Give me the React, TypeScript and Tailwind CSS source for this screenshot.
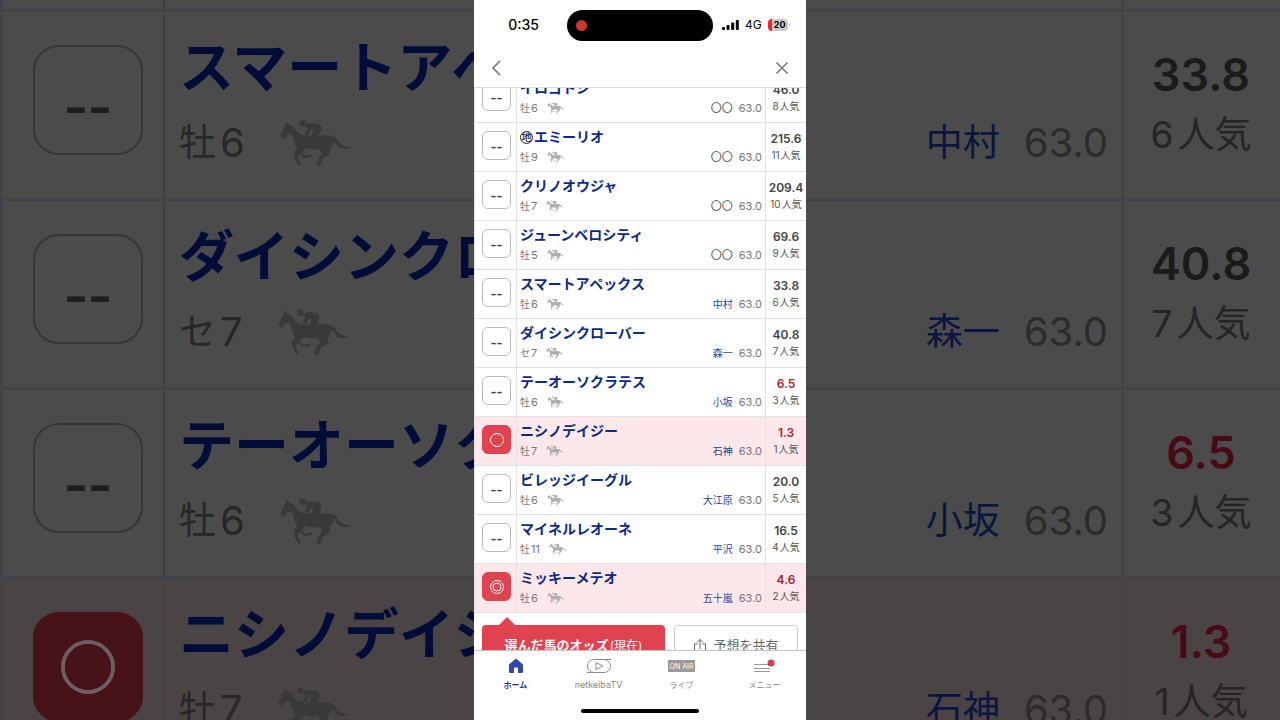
import clsx from "clsx";

interface Horse {
  mark: "none" | "single" | "double";
  name: string;
  local?: boolean;
  sex: string;
  age: number;
  jockey?: string;
  odds: string;
  rank: number;
}

const horses: Horse[] = [
  { mark: "none", name: "イロゴトシ", sex: "牡", age: 6, odds: "46.0", rank: 8 },
  { mark: "none", name: "エミーリオ", local: true, sex: "牡", age: 9, odds: "215.6", rank: 11 },
  { mark: "none", name: "クリノオウジャ", sex: "牡", age: 7, odds: "209.4", rank: 10 },
  { mark: "none", name: "ジューンベロシティ", sex: "牡", age: 5, odds: "69.6", rank: 9 },
  { mark: "none", name: "スマートアペックス", sex: "牡", age: 6, jockey: "中村", odds: "33.8", rank: 6 },
  { mark: "none", name: "ダイシンクローバー", sex: "セ", age: 7, jockey: "森一", odds: "40.8", rank: 7 },
  { mark: "none", name: "テーオーソクラテス", sex: "牡", age: 6, jockey: "小坂", odds: "6.5", rank: 3 },
  { mark: "single", name: "ニシノデイジー", sex: "牡", age: 7, jockey: "石神", odds: "1.3", rank: 1 },
  { mark: "none", name: "ビレッジイーグル", sex: "牡", age: 6, jockey: "大江原", odds: "20.0", rank: 5 },
  { mark: "none", name: "マイネルレオーネ", sex: "牡", age: 11, jockey: "平沢", odds: "16.5", rank: 4 },
  { mark: "double", name: "ミッキーメテオ", sex: "牡", age: 6, jockey: "五十嵐", odds: "4.6", rank: 2 },
];

const backdropHorses = horses.slice(4, 8);

const HorseIcon = ({ className }: { className: string }) => (
  <svg viewBox="28 26 228 150" className={className} fill="currentColor" aria-hidden="true">
    <path d="M32 79 L44 52 L51 41 L54 32 L59 42 Q72 48 82 62 Q92 76 112 78 L178 77 Q200 78 208 88 Q220 112 252 115 Q232 125 216 115 Q206 106 199 94 Q198 108 188 118 L187 138 L166 149 L156 173 L144 171 L151 149 L163 135 L156 120 Q132 124 112 117 L98 130 L110 141 L130 137 L132 144 L108 149 L90 134 L87 150 L97 169 L88 171 L77 150 L73 130 L86 118 Q76 106 74 92 L68 74 L56 74 L42 89 Z" />
    <circle cx="101" cy="40" r="10" />
    <path d="M107 47 Q120 36 134 39 L152 42 Q163 48 160 60 L152 78 L128 78 L138 62 L129 58 L119 77 L108 72 L118 55 Z" />
  </svg>
);

const MarkCircle = ({ mark, className }: { mark: Horse["mark"]; className: string }) => (
  <svg viewBox="0 0 14 14" className={className} fill="none" stroke="currentColor" aria-hidden="true">
    <circle cx="7" cy="7" r="6.5" />
    {mark === "double" && <circle cx="7" cy="7" r="4" />}
  </svg>
);

const StatusBar = () => (
  <div className="grid h-[50px] grid-cols-[1fr_146px_1fr] items-center text-black">
    <span className="pl-1.5 text-center text-sm font-medium">0:35</span>
    <div className="flex h-[31px] items-center rounded-full bg-black pl-[9px]">
      <span className="size-[11px] rounded-full bg-[#cf3533]" />
    </div>
    <div className="flex items-center gap-1.5 pl-[9px]">
      <svg viewBox="0 0 17 10" className="h-2.5 w-[17px]" aria-hidden="true">
        <rect x="0" y="7" width="3" height="3" rx="1" />
        <rect x="4.6" y="5" width="3" height="5" rx="1" />
        <rect x="9.2" y="2.5" width="3" height="7.5" rx="1" />
        <rect x="13.8" y="0" width="3" height="10" rx="1" />
      </svg>
      <span className="text-xs">4G</span>
      <div className="flex items-center gap-px">
        <div className="flex h-3 w-5 items-center justify-center rounded border-l-4 border-[#ee2436] bg-[#c9c9c9] text-[9px] font-bold">
          20
        </div>
        <span className="h-1 w-px rounded-r bg-[#c9c9c9]" />
      </div>
    </div>
  </div>
);

const Header = () => (
  <header className="shrink-0 border-b border-[#dcdce0]">
    <StatusBar />
    <div className="flex h-[37px] items-center justify-between px-4 pb-0.5 text-[#777]">
      <button type="button" aria-label="戻る">
        <svg viewBox="0 0 12 16" className="h-4 w-3" fill="none" stroke="currentColor" strokeWidth="1.7">
          <path d="M10 1 L3 8 L10 15" />
        </svg>
      </button>
      <button type="button" aria-label="閉じる">
        <svg viewBox="0 0 16 16" className="size-4" fill="none" stroke="currentColor" strokeWidth="1.5">
          <path d="M2.5 2.5 L13.5 13.5 M13.5 2.5 L2.5 13.5" />
        </svg>
      </button>
    </div>
  </header>
);

const HorseRow = ({ horse }: { horse: Horse }) => {
  const marked = horse.mark !== "none";

  return (
    <tr className={clsx("h-[49px]", marked && "bg-[#fce8ea]")}>
      <td className="border-r border-b border-[#e2e2e6] p-0 pb-[3px] pl-[7px]">
        <button
          type="button"
          aria-label={`${horse.name}の印`}
          className={clsx(
            "flex size-[29px] items-center justify-center rounded-md border font-['Liberation_Sans',sans-serif] text-lg leading-none",
            marked ? "border-[#e04350] bg-[#e04350] text-white" : "border-[#bbb] bg-white pt-0.5 text-[#444]",
          )}
        >
          {marked ? <MarkCircle mark={horse.mark} className="size-3.5" /> : "--"}
        </button>
      </td>
      <td className="border-r border-b border-[#e2e2e6] pt-1 pr-[3px] pb-0 pl-[3px] align-top">
        <a href="#" className="flex h-5 items-center text-sm leading-5 font-bold text-[#0b2a86]">
          {horse.local && (
            <span className="mr-px flex size-[13px] items-center justify-center rounded-full border border-[#222] text-[10px] leading-none font-medium text-[#222]">
              地
            </span>
          )}
          {horse.name}
        </a>
        <div className="flex h-5 items-center text-[10px] text-[#777]">
          <span>{horse.sex}</span>
          <span className="ml-px text-[11px]">{horse.age}</span>
          <HorseIcon className="ml-[9px] h-3 w-[18px] text-[#adadad]" />
          {horse.jockey ? (
            <a href="#" className="ml-auto text-[#2c459b]">
              {horse.jockey}
            </a>
          ) : (
            <span className="ml-auto text-[11px] text-[#444]">〇〇</span>
          )}
          <span className="ml-1.5 text-[11px]">63.0</span>
        </div>
      </td>
      <td className="border-b border-[#e2e2e6] p-0 text-center">
        <div className={clsx("text-xs leading-4 font-semibold", Number(horse.odds) < 10 ? "text-[#b01c35]" : "text-[#444]")}>
          {horse.odds}
        </div>
        <div className="text-[10px] leading-4 text-[#555]">
          <span className="mr-px">{horse.rank}</span>人気
        </div>
      </td>
    </tr>
  );
};

const Actions = () => (
  <div className="flex gap-[9px] px-2 pt-3">
    <button
      type="button"
      className="relative flex h-[42px] flex-3 items-center justify-center gap-px rounded-sm bg-[#e04350] text-[13px] font-bold text-white"
    >
      <span className="absolute -top-2 left-[17px] border-x-8 border-b-8 border-x-transparent border-b-[#e04350]" />
      選んだ馬のオッズ<span className="text-xs font-normal">(現在)</span>
    </button>
    <button
      type="button"
      className="flex h-[42px] flex-2 items-center justify-center gap-1.5 rounded-sm border border-[#ccc] text-[13px] text-[#666]"
    >
      <svg viewBox="0 0 14 16" className="h-4 w-3.5" fill="none" stroke="currentColor" aria-hidden="true">
        <path d="M4.5 6 H1.5 V14.5 H12.5 V6 H9.5 M7 11 V1.5 M4 4.5 L7 1.5 L10 4.5" />
      </svg>
      予想を共有
    </button>
  </div>
);

const TabBar = () => (
  <nav className="h-[70px] shrink-0 border-t border-[#c4c4c8]">
    <div className="grid grid-cols-4 pt-1.5 text-center text-[8px] leading-3 text-[#888]">
      <a href="#" className="flex flex-col items-center gap-1 font-bold text-[#1c399e]">
        <span className="flex h-[18px] items-center">
          <svg viewBox="0 0 16 16" className="size-4" fill="#3049ae" aria-hidden="true">
            <path d="M8 0.5 L15 6.5 V14 Q15 15 14 15 H10 V10.5 Q10 9.5 9 9.5 H7 Q6 9.5 6 10.5 V15 H2 Q1 15 1 14 V6.5 Z" />
          </svg>
        </span>
        ホーム
      </a>
      <a href="#" className="flex flex-col items-center gap-1">
        <span className="flex h-[18px] items-center">
          <svg viewBox="0 0 24 14" className="h-3.5 w-6" fill="none" stroke="#8e8e8e" aria-hidden="true">
            <rect x="0.5" y="0.5" width="23" height="13" rx="6.5" />
            <path d="M7 0.5 H24 M0 13.5 H17" />
            <path d="M9 3.5 V10.5 L16 7 Z" strokeLinejoin="round" />
          </svg>
        </span>
        <span className="text-[9px]">netkeibaTV</span>
      </a>
      <a href="#" className="flex flex-col items-center gap-1">
        <span className="flex h-[18px] items-center">
          <span className="flex h-3 w-[27px] items-center justify-center bg-[#9a9a9a] text-[7px] leading-none whitespace-nowrap text-white">
            ON AIR
          </span>
        </span>
        ライブ
      </a>
      <a href="#" className="flex flex-col items-center gap-1">
        <span className="flex h-[18px] items-center">
          <svg viewBox="0 0 22 14" className="h-3.5 w-[22px]" aria-hidden="true">
            <path d="M0 5.5 H16 M0 9.5 H16 M0 12.5 H16" stroke="#999" />
            <circle cx="17" cy="4" r="3.5" fill="#e03a49" />
          </svg>
        </span>
        メニュー
      </a>
    </div>
    <div className="mx-auto mt-[18px] h-1 w-[118px] rounded-full bg-black" />
  </nav>
);

// Dimmed, enlarged copies of the same list on both sides of the phone screen
const BackdropLeft = () => (
  <div className="min-w-0 flex-1 overflow-hidden bg-[#4b4b4b]" aria-hidden="true">
    <table className="w-full table-fixed border-separate border-spacing-0 border-l-3 border-[#434347] whitespace-nowrap">
      <colgroup>
        <col className="w-[162px]" />
        <col />
      </colgroup>
      <tbody>
        <tr className="h-3">
          <td className="border-r-3 border-b-3 border-[#434347] p-0" />
          <td className="border-b-3 border-[#434347] p-0" />
        </tr>
        {backdropHorses.map((horse) => {
          const marked = horse.mark !== "none";
          return (
            <tr key={horse.name} className={clsx("h-[189px]", marked && "bg-[#4b4444]")}>
              <td className="border-r-3 border-b-3 border-[#434347] p-0 pt-[33px] pl-[30px] align-top">
                <div
                  className={clsx(
                    "flex size-[110px] items-center justify-center rounded-[26px] border-2 font-['Liberation_Sans',sans-serif] text-[72px] leading-none",
                    marked ? "border-[#471319] bg-[#471319] text-[#6c6062]" : "border-[#363636] pt-2 text-[#1d1d1d]",
                  )}
                >
                  {marked ? <MarkCircle mark={horse.mark} className="size-[54px]" /> : "--"}
                </div>
              </td>
              <td className="overflow-hidden border-b-3 border-[#434347] p-0 pt-[17px] pl-[14px] align-top">
                <div className="h-[76px] text-[55px] leading-[76px] font-bold text-[#020c38]">{horse.name.slice(0, 6)}</div>
                <div className="flex h-[76px] items-center text-[37px] text-[#272727]">
                  <span>{horse.sex}</span>
                  <span className="ml-1 text-[40px]">{horse.age}</span>
                  <HorseIcon className="ml-[34px] h-12 w-[73px] text-[#393939]" />
                </div>
              </td>
            </tr>
          );
        })}
      </tbody>
    </table>
  </div>
);

const BackdropRight = () => (
  <div className="min-w-0 flex-1 overflow-hidden bg-[#4b4b4b]" aria-hidden="true">
    <table className="w-full table-fixed border-separate border-spacing-0 whitespace-nowrap">
      <colgroup>
        <col />
        <col className="w-[156px]" />
      </colgroup>
      <tbody>
        <tr className="h-3">
          <td className="border-r-3 border-b-3 border-[#434347] p-0" />
          <td className="border-b-3 border-[#434347] p-0" />
        </tr>
        {backdropHorses.map((horse) => (
          <tr key={horse.name} className={clsx("h-[189px]", horse.mark !== "none" && "bg-[#4b4444]")}>
            <td className="border-r-3 border-b-3 border-[#434347] p-0 pt-[93px] pr-[13px] align-top">
              <div className="flex h-[76px] items-center justify-end gap-6">
                <span className="text-[37px] text-[#0a1640]">{horse.jockey}</span>
                <span className="text-[40px] text-[#2b2b2b]">63.0</span>
              </div>
            </td>
            <td className="border-b-3 border-[#434347] p-0 pr-0.5 text-center">
              <div className={clsx("text-[45px] leading-[60px] font-semibold", Number(horse.odds) < 10 ? "text-[#480b16]" : "text-[#1b1b1b]")}>
                {horse.odds}
              </div>
              <div className="text-[37px] leading-[60px] text-[#252525]">
                <span className="mr-1">{horse.rank}</span>人気
              </div>
            </td>
          </tr>
        ))}
      </tbody>
    </table>
  </div>
);

const App = () => {
  return (
    <div className="flex h-screen overflow-hidden bg-[#4b4b4b] font-['Inter','Noto_Sans_CJK_JP',sans-serif]">
      <BackdropLeft />
      <main className="flex w-[332px] shrink-0 flex-col bg-white">
        <Header />
        <div className="flex min-h-0 flex-1 flex-col justify-end overflow-hidden">
          <table className="w-full shrink-0 table-fixed border-separate border-spacing-0 border-l border-[#e2e2e6]">
            <colgroup>
              <col className="w-[42px]" />
              <col />
              <col className="w-10" />
            </colgroup>
            <tbody>
              {horses.map((horse) => (
                <HorseRow key={horse.name} horse={horse} />
              ))}
            </tbody>
          </table>
          <div className="h-[37px] shrink-0">
            <Actions />
          </div>
        </div>
        <TabBar />
      </main>
      <BackdropRight />
    </div>
  );
};

export default App;
